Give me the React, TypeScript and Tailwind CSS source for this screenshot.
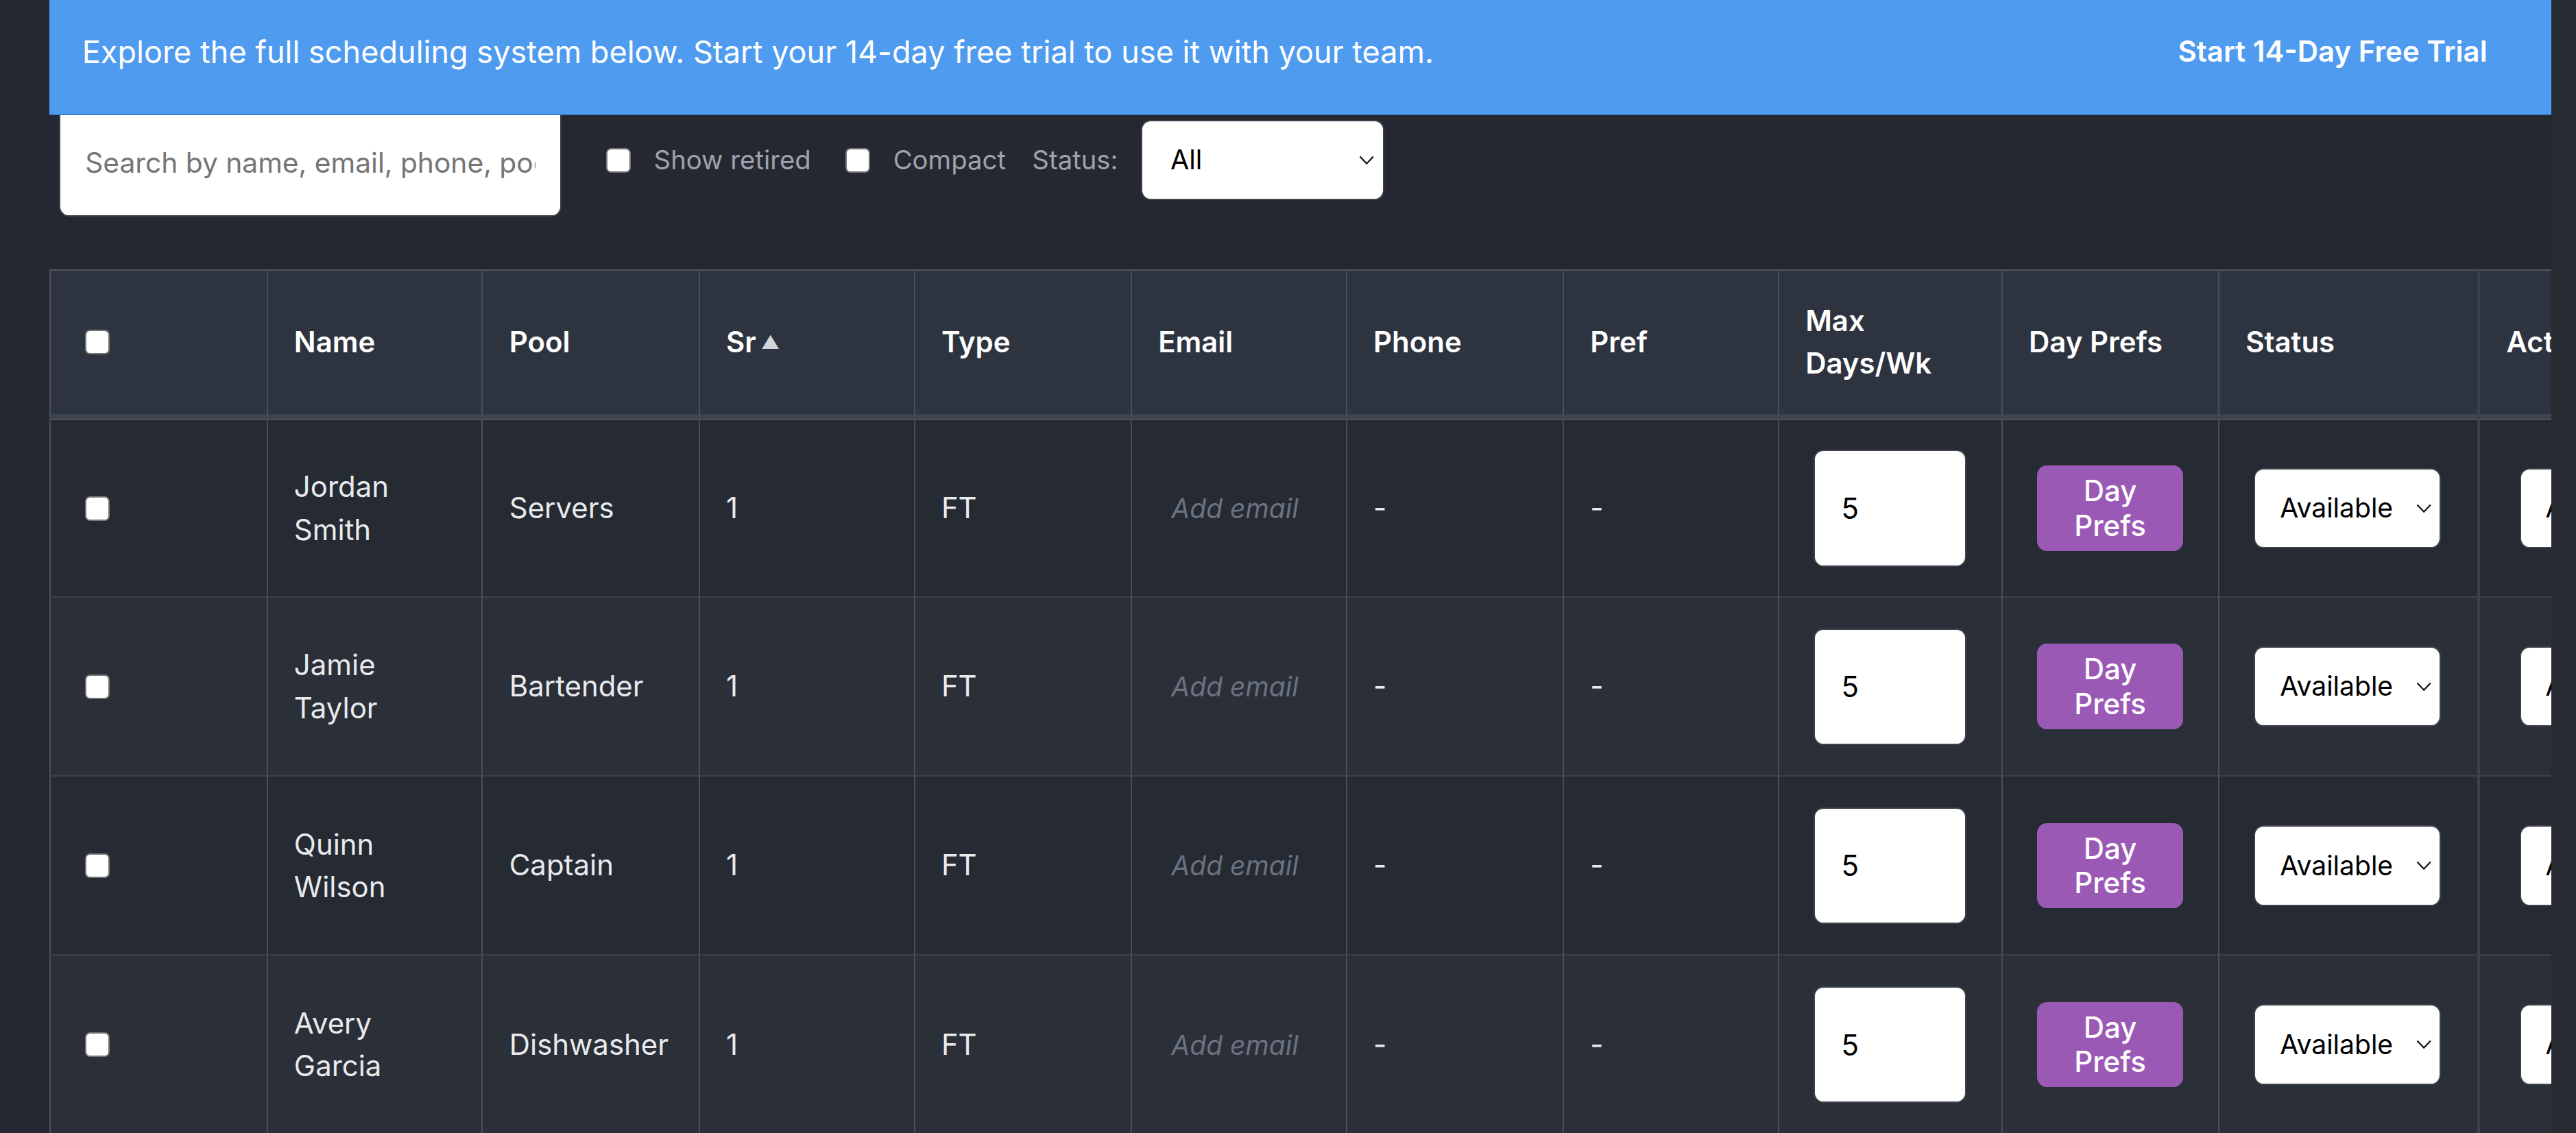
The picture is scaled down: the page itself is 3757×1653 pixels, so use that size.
import React from 'react';

const ROWS = [
  { name: 'Jordan Smith', pool: 'Servers' },
  { name: 'Jamie Taylor', pool: 'Bartender' },
  { name: 'Quinn Wilson', pool: 'Captain' },
  { name: 'Avery Garcia', pool: 'Dishwasher' },
];

const COLS = [
  { label: '', w: 'w-[133px]' },
  { label: 'Name', w: 'w-[131px]' },
  { label: 'Pool', w: 'w-[132px]' },
  { label: 'Sr', w: 'w-[131px]' },
  { label: 'Type', w: 'w-[132px]' },
  { label: 'Email', w: 'w-[131px]' },
  { label: 'Phone', w: 'w-[132px]' },
  { label: 'Pref', w: 'w-[131px]' },
  { label: 'Max Days/Wk', w: 'w-[136px]' },
  { label: 'Day Prefs', w: 'w-[132px]' },
  { label: 'Status', w: 'w-[157px]' },
  { label: 'Actions', w: 'w-[142px]' },
];

function Chevron() {
  return (
    <svg
      viewBox="0 0 11 7"
      className="pointer-events-none absolute right-[5px] top-1/2 h-[6px] w-[11px] -translate-y-1/2"
      fill="none"
      stroke="#111"
      strokeWidth="1.1"
    >
      <polyline points="0.8,0.8 5.5,5.8 10.2,0.8" />
    </svg>
  );
}

function Checkbox({ className = '' }: { className?: string }) {
  return (
    <input
      type="checkbox"
      className={`block h-[15px] w-[15px] appearance-none rounded-[3px] border border-[#767676] bg-white ${className}`}
    />
  );
}

function cellBorder(i: number) {
  if (i === 0) return 'border-l border-r border-[#4b4e55]';
  if (i === 10) return '';
  if (i === 11) return 'border-l-2 border-l-[#3a414d]';
  return 'border-r border-[#4b4e55]';
}

export default function App() {
  return (
    <div className="flex h-[690px] overflow-hidden bg-[#252830] font-[Inter,sans-serif] text-[17.5px] [zoom:2.396]">
      <div className="min-w-0 flex-1 pl-[30px]">
        <div className="relative z-10 flex h-[70px] items-center justify-between border-b border-[#3b82d6] bg-[#4e9bf0] pb-[6px] pl-[20px] pr-[39px] text-white">
          <p className="text-[18.8px]">
            Explore the full scheduling system below. Start your 14-day free trial to use it with your team.
          </p>
          <button className="font-semibold">Start 14-Day Free Trial</button>
        </div>

        <div className="relative -mt-[7px] flex h-[69px] items-center pl-[6px] text-[16px]">
          <input
            className="h-[69px] w-[306px] rounded-md border border-[#3d424c] bg-white px-[15px] pt-[3px] text-[17px] text-black placeholder:text-[#757575] focus:outline-none"
            placeholder="Search by name, email, phone, pool"
          />
          <Checkbox className="ml-[27px]" />
          <span className="ml-[14px] text-[#9ca3af]">Show retired</span>
          <Checkbox className="ml-[21px]" />
          <span className="ml-[14px] text-[#9ca3af]">Compact</span>
          <span className="ml-[16px] text-[#9ca3af]">Status:</span>
          <div className="relative ml-[14px] h-[49px] w-[148px]">
            <select className="h-full w-full appearance-none rounded-md border border-[#3d424c] bg-white pl-[17px] text-[16.5px] text-black">
              <option>All</option>
            </select>
            <Chevron />
          </div>
        </div>

        <div className="mt-[32px] overflow-hidden">
          <table className="w-[1620px] table-fixed border-separate border-spacing-0">
            <colgroup>
              {COLS.map((c, i) => (
                <col key={i} className={c.w} />
              ))}
            </colgroup>
            <thead>
              <tr>
                {COLS.map((c, i) => (
                  <th
                    key={i}
                    className={`h-[91px] border-t border-t-[#555] border-b-[3px] border-b-[#3d4451] bg-[#2e343f] px-4 text-left align-middle font-semibold leading-[26px] text-white ${cellBorder(i)}`}
                  >
                    {i === 0 ? (
                      <Checkbox className="ml-[5px]" />
                    ) : c.label === 'Sr' ? (
                      <span className="flex items-center gap-[3px]">
                        Sr<span className="text-[11px] text-[#d1d5db]">▲</span>
                      </span>
                    ) : (
                      c.label
                    )}
                  </th>
                ))}
              </tr>
            </thead>
            <tbody className="text-[#e8eaed]">
              {ROWS.map((r, ri) => {
                const bg = ri % 2 === 0 ? 'bg-[#252a33]' : 'bg-[#2b2f38]';
                const top = ri === 0 ? 'border-t border-t-[#555]' : '';
                const td = `h-[109px] border-b border-b-[#3b424e] px-4 align-middle ${bg} ${top}`;
                return (
                  <tr key={r.name}>
                    <td className={`${td} ${cellBorder(0)}`}>
                      <Checkbox className="ml-[5px]" />
                    </td>
                    <td className={`${td} ${cellBorder(1)} leading-[26px]`}>{r.name}</td>
                    <td className={`${td} ${cellBorder(2)} whitespace-nowrap`}>{r.pool}</td>
                    <td className={`${td} ${cellBorder(3)}`}>1</td>
                    <td className={`${td} ${cellBorder(4)}`}>FT</td>
                    <td className={`${td} ${cellBorder(5)}`}>
                      <input
                        className="w-full bg-transparent px-2 text-[16.3px] italic text-[#e8eaed] placeholder:text-[#6b7280] focus:outline-none"
                        placeholder="Add email"
                      />
                    </td>
                    <td className={`${td} ${cellBorder(6)}`}>-</td>
                    <td className={`${td} ${cellBorder(7)}`}>-</td>
                    <td className={`${td} ${cellBorder(8)}`}>
                      <input
                        className="ml-[5px] block h-[71px] w-[93px] rounded-md border border-[#3d424c] bg-white px-4 text-black focus:outline-none"
                        defaultValue="5"
                      />
                    </td>
                    <td className={`${td} ${cellBorder(9)}`}>
                      <button className="ml-[5px] block h-[52px] w-[89px] rounded-md bg-[#9b59b6] px-[20px] font-medium leading-[21px] text-white">
                        Day Prefs
                      </button>
                    </td>
                    <td className={`${td} ${cellBorder(10)}`}>
                      <div className="relative ml-[5px] h-[49px] w-[114px]">
                        <select className="h-full w-full appearance-none rounded-md border border-[#3d424c] bg-white pl-[15px] text-[16.3px] text-black">
                          <option>Available</option>
                        </select>
                        <Chevron />
                      </div>
                    </td>
                    <td className={`${td} ${cellBorder(11)}`}>
                      <div className="relative ml-[8px] h-[49px] w-[110px]">
                        <select className="h-full w-full appearance-none rounded-md border border-[#3d424c] bg-white pl-[15px] text-[16.3px] text-black">
                          <option>Actions</option>
                        </select>
                        <Chevron />
                      </div>
                    </td>
                  </tr>
                );
              })}
            </tbody>
          </table>
        </div>
      </div>
      <div className="w-[15px] shrink-0 bg-[#272a31]" />
    </div>
  );
}
